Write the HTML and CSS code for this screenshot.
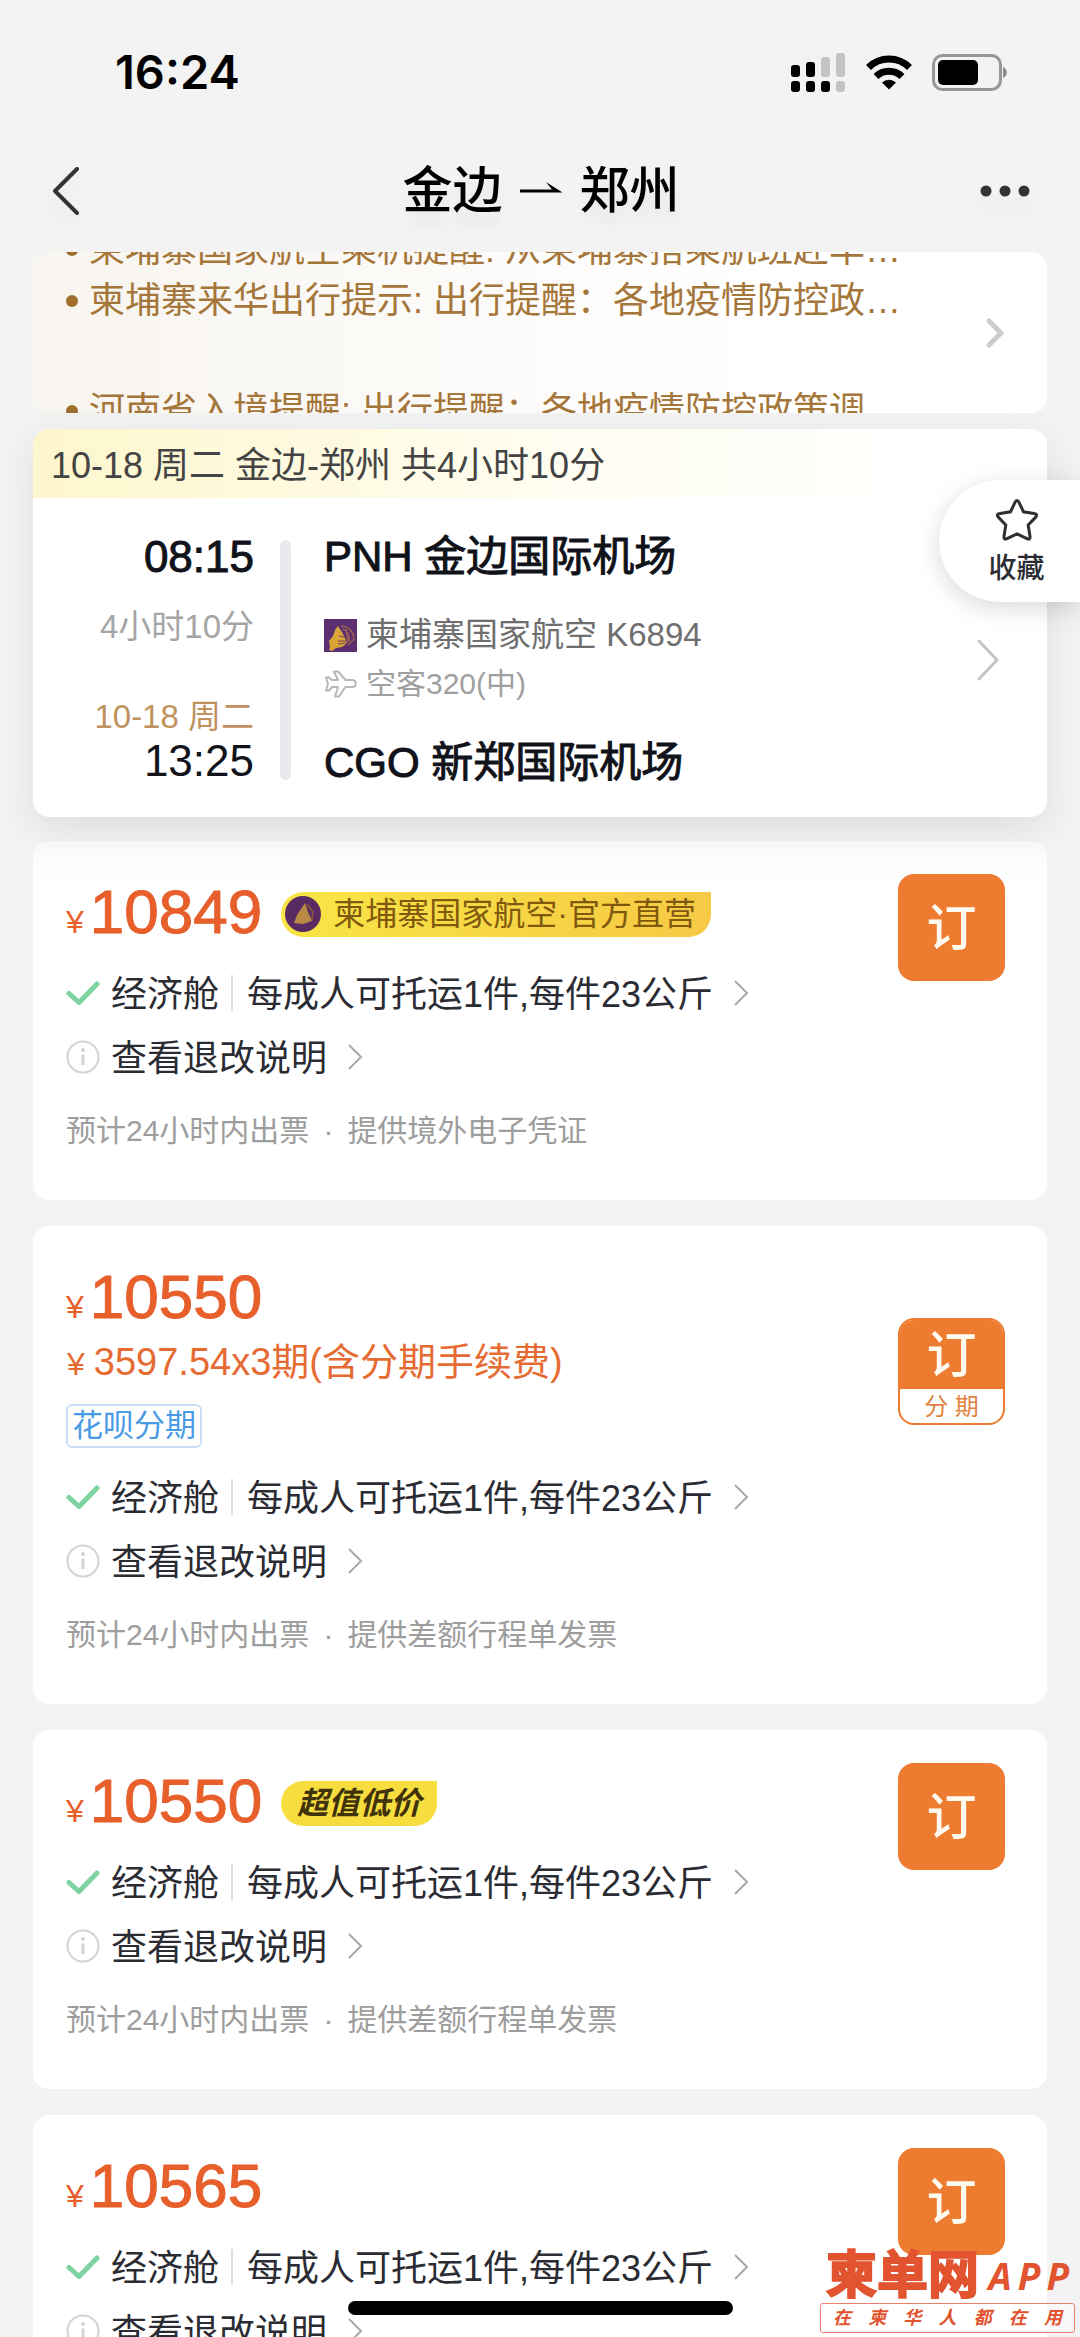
FILE: index.html
```html
<!DOCTYPE html>
<html lang="zh-CN">
<head>
<meta charset="utf-8">
<meta name="viewport" content="width=device-width, initial-scale=1">
<title>金边 - 郑州</title>
<link rel="stylesheet" href="styles.css">
</head>
<body>
<svg class="defs" width="0" height="0" aria-hidden="true">
  <defs>
    <symbol id="chevron" viewBox="0 0 16 28"><path d="M2 2l12 12L2 26" fill="none" stroke="currentColor" stroke-width="2"/></symbol>
    <symbol id="check" viewBox="0 0 34 24"><path d="M3 12.500l10 9L31 3" fill="none" stroke="#7fd3a2" stroke-width="5" stroke-linecap="round"/></symbol>
    <symbol id="info" viewBox="0 0 34 34"><circle cx="17" cy="17" r="15.500" fill="none" stroke="#d3d3d8" stroke-width="2"/><circle cx="17" cy="10" r="2" fill="#d3d3d8"/><path d="M17 14.500v10.500" stroke="#d3d3d8" stroke-width="3"/></symbol>
    <symbol id="airline" viewBox="0 0 33 33"><path d="M14 7l5 8 4 9-5 4-6 1-4 3-3-1 1-3-1-6 4-5 2-6z" fill="#d9a438"/><path d="M17 7c7 0 13 6 13 13l-6 6M19 10c5 2 7 7 6 12M14 22l8 0M14 25l8-1M15 17l5 1M22 10l2 13" fill="none" stroke="#9c5f52" stroke-width="1.500"/></symbol>
  </defs>
</svg>
<div class="app">
  <header>
    <div class="status">
      <span class="clock">16:24</span>
      <div class="status-icons">
        <svg width="55" height="39" viewBox="0 0 55 39"><g fill="#000"><rect x="0" y="12" width="9" height="12" rx="3"/><rect x="15" y="9" width="9" height="15" rx="3"/><rect x="0" y="28" width="9" height="11" rx="3"/><rect x="15" y="28" width="9" height="11" rx="3"/><rect x="30" y="28" width="9" height="11" rx="3"/></g><g fill="#c3c3c3"><rect x="30" y="4" width="9" height="20" rx="3"/><rect x="45" y="0" width="9" height="24" rx="3"/><rect x="45" y="28" width="9" height="11" rx="3"/></g></svg>
        <svg width="46" height="36" viewBox="0 0 46 36"><g fill="none" stroke="#000" stroke-width="7"><path d="M2.500 13.500a29 29 0 0 1 41 0"/><path d="M10 22.500a18.500 18.500 0 0 1 26 0"/></g><path d="M16 28.500a10 10 0 0 1 14 0L23 35.500z"/></svg>
        <svg width="76" height="37" viewBox="0 0 76 37"><rect x="1.500" y="1.500" width="67" height="34" rx="9" fill="none" stroke="#979797" stroke-width="3"/><rect x="6" y="6" width="40" height="25" rx="5"/><path d="M71 13c5 2 5 9 0 11z" fill="#8a8a8a"/></svg>
      </div>
    </div>
    <nav class="nav">
      <button class="icon-button" type="button" aria-label="返回"><svg width="30" height="52" viewBox="0 0 30 52"><path d="M26 4L4 26l22 22" fill="none" stroke="#333" stroke-width="4" stroke-linecap="round" stroke-linejoin="round"/></svg></button>
      <h1 class="title"><span>金边</span><svg width="43" height="18" viewBox="0 0 43 18"><path d="M0 7.500h32L26 0l16.500 10.500H0z"/></svg><span>郑州</span></h1>
      <button class="icon-button" type="button" aria-label="更多"><svg width="52" height="14" viewBox="0 0 52 14" fill="#333"><circle cx="7" cy="7" r="5.500"/><circle cx="26" cy="7" r="5.500"/><circle cx="45" cy="7" r="5.500"/></svg></button>
    </nav>
  </header>

  <main>
    <a class="notice" href="#notice">
      <ul class="notice-list">
        <li>柬埔寨国家航空乘机提醒: 从柬埔寨搭乘航班赴华…</li>
        <li>柬埔寨来华出行提示: 出行提醒：各地疫情防控政…</li>
        <li class="next">河南省入境提醒: 出行提醒：各地疫情防控政策调</li>
      </ul>
      <svg class="notice-chevron" width="18" height="30" viewBox="0 0 18 30"><path d="M3 3l12 12L3 27" fill="none" stroke="#ccc" stroke-width="5" stroke-linecap="round" stroke-linejoin="round"/></svg>
    </a>

    <section class="flight">
      <h2 class="flight-head">10-18 周二 金边-郑州 共4小时10分</h2>
      <div class="flight-body">
        <div class="times">
          <span class="time medium">08:15</span>
          <span class="duration">4小时10分</span>
          <span class="arrive-date">10-18 周二</span>
          <span class="time arrive">13:25</span>
        </div>
        <div class="bar"></div>
        <div class="route">
          <strong class="airport">PNH 金边国际机场</strong>
          <span class="carrier"><svg class="carrier-logo" width="33" height="33"><use href="#airline"/></svg>柬埔寨国家航空 K6894</span>
          <span class="aircraft"><svg width="33" height="30" viewBox="0 0 33 30"><path d="M14 11L10 2.500h4L21.500 11H28c5 0 5 7 0 7h-6.500L15 27.500h-4L14 18H8l-3 3.500H2L4 15 2 8.500h3L8 11z" fill="none" stroke="#b8b8b8" stroke-width="2" stroke-linejoin="round"/></svg>空客320(中)</span>
          <strong class="airport last">CGO 新郑国际机场</strong>
        </div>
        <svg class="flight-chevron" width="22" height="42" viewBox="0 0 22 42"><path d="M2 2l18 19L2 40" fill="none" stroke="#c4c4c4" stroke-width="3" stroke-linecap="round"/></svg>
      </div>
      <button class="favorite" type="button"><svg width="44" height="44" viewBox="0 0 44 44"><path d="M22 2.500c1 0 1.500.800 2 2l4.500 9.300 10.500 1.600c3 .500 3.500 2 1.500 4l-7.300 7.600 1.800 11.500c.300 2.500-1 3.200-3 2.100L22 36l-10 4.600c-2 1.100-3.300.400-3-2.100L10.800 27l-7.300-7.600c-2-2-1.500-3.500 1.500-4l10.500-1.600L20 4.500c.500-1.200 1-2 2-2z" fill="none" stroke="#2f2f33" stroke-width="3"/></svg>收藏</button>
    </section>

    <article class="fare">
      <div class="fare-info">
        <div class="price-line"><span class="price"><span class="yen">¥</span>10849</span><span class="badge official"><svg width="36" height="36" viewBox="0 0 36 36"><circle cx="18" cy="18" r="18" fill="#5a2b63"/><path d="M20 7l3 9 4 9-9 3-9-1 3-8z" fill="#b98a44"/><path d="M22 8l6 8-1 8" stroke="#85503f" fill="none" stroke-width="2"/></svg>柬埔寨国家航空·官方直营</span></div>
        <a class="row" href="#cabin"><svg width="34" height="24"><use href="#check"/></svg><span>经济舱</span><i class="divider"></i><span>每成人可托运1件,每件23公斤</span><svg class="more" width="16" height="28"><use href="#chevron"/></svg></a>
        <a class="row" href="#refund"><svg width="34" height="34"><use href="#info"/></svg><span>查看退改说明</span><svg class="more" width="16" height="28"><use href="#chevron"/></svg></a>
        <p class="note"><span>预计24小时内出票</span><span>·</span><span>提供境外电子凭证</span></p>
      </div>
      <button class="order" type="button">订</button>
    </article>

    <article class="fare">
      <div class="fare-info">
        <div class="price-line"><span class="price"><span class="yen">¥</span>10550</span></div>
        <p class="installment"><span class="yen">¥</span>3597.54x3期(含分期手续费)</p>
        <span class="tag">花呗分期</span>
        <a class="row" href="#cabin"><svg width="34" height="24"><use href="#check"/></svg><span>经济舱</span><i class="divider"></i><span>每成人可托运1件,每件23公斤</span><svg class="more" width="16" height="28"><use href="#chevron"/></svg></a>
        <a class="row" href="#refund"><svg width="34" height="34"><use href="#info"/></svg><span>查看退改说明</span><svg class="more" width="16" height="28"><use href="#chevron"/></svg></a>
        <p class="note"><span>预计24小时内出票</span><span>·</span><span>提供差额行程单发票</span></p>
      </div>
      <button class="order split" type="button"><span class="order-main">订</span><span class="order-sub">分 期</span></button>
    </article>

    <article class="fare">
      <div class="fare-info">
        <div class="price-line"><span class="price"><span class="yen">¥</span>10550</span><span class="badge value">超值低价</span></div>
        <a class="row" href="#cabin"><svg width="34" height="24"><use href="#check"/></svg><span>经济舱</span><i class="divider"></i><span>每成人可托运1件,每件23公斤</span><svg class="more" width="16" height="28"><use href="#chevron"/></svg></a>
        <a class="row" href="#refund"><svg width="34" height="34"><use href="#info"/></svg><span>查看退改说明</span><svg class="more" width="16" height="28"><use href="#chevron"/></svg></a>
        <p class="note"><span>预计24小时内出票</span><span>·</span><span>提供差额行程单发票</span></p>
      </div>
      <button class="order" type="button">订</button>
    </article>

    <article class="fare">
      <div class="fare-info">
        <div class="price-line"><span class="price"><span class="yen">¥</span>10565</span></div>
        <a class="row" href="#cabin"><svg width="34" height="24"><use href="#check"/></svg><span>经济舱</span><i class="divider"></i><span>每成人可托运1件,每件23公斤</span><svg class="more" width="16" height="28"><use href="#chevron"/></svg></a>
        <a class="row" href="#refund"><svg width="34" height="34"><use href="#info"/></svg><span>查看退改说明</span><svg class="more" width="16" height="28"><use href="#chevron"/></svg></a>
      </div>
      <button class="order" type="button">订</button>
    </article>
  </main>

  <div class="home-indicator"></div>
  <div class="watermark">
    <div class="watermark-name"><span class="watermark-brand">柬单网</span><span class="watermark-app"><span>A</span><span>P</span><span>P</span></span></div>
    <div class="watermark-line"><span>在</span><span>柬</span><span>华</span><span>人</span><span>都</span><span>在</span><span>用</span></div>
  </div>
</div>
</body>
</html>
```
FILE: styles.css
```css
* { box-sizing: border-box; }

body {
  margin: 0;
  background: #f3f3f3;
  color: #2b2c33;
  font-family: "Liberation Sans", "Noto Sans CJK SC", sans-serif;
  font-size: 36px;
}

h1, h2, p, ul { margin: 0; padding: 0; font-weight: 400; }
a { color: inherit; text-decoration: none; }
button { border: 0; padding: 0; background: none; font: inherit; color: inherit; }
svg { display: block; flex: none; }
.defs { position: absolute; }

.app {
  position: relative;
  height: 100vh;
  overflow: hidden;
  display: flex;
  flex-direction: column;
}
header { flex: none; padding-bottom: 14px; }

/* Status bar */
.status {
  height: 144px;
  padding: 0 72px 0 115px;
  display: flex;
  align-items: center;
  justify-content: space-between;
}
.clock { font: 600 47px/56px Inter, sans-serif; color: #000; }
.status-icons { display: flex; align-items: center; gap: 20px; }

/* Title bar */
.nav {
  height: 94px;
  padding: 0 49px 0 51px;
  display: grid;
  grid-template-columns: 60px 1fr 60px;
  align-items: center;
}
.icon-button { display: flex; align-items: center; height: 60px; filter: drop-shadow(0 12px 8px rgba(0, 0, 0, .05)); }
.icon-button:last-child { justify-content: flex-end; }
.title {
  display: flex;
  align-items: center;
  justify-content: center;
  gap: 17px;
  font-size: 50px;
  line-height: 60px;
  font-weight: 500;
  color: #000;
  text-shadow: 0 14px 12px rgba(0, 0, 0, .05);
}

main {
  flex: 1;
  min-height: 0;
  padding: 0 33px;
}

/* Travel notice ticker */
.notice {
  display: flex;
  align-items: center;
  justify-content: space-between;
  height: 161px;
  padding: 0 43px 0 33px;
  overflow: hidden;
  border-radius: 16px;
  background: linear-gradient(90deg, #f8f5f0, #fff 75%);
  color: #a5763a;
}
.notice-list { align-self: flex-start; margin-top: -28px; list-style: none; line-height: 51px; white-space: nowrap; }
.notice-list li { display: flex; align-items: center; gap: 11px; }
.notice-list li::before { content: ""; width: 12px; height: 12px; border-radius: 50%; background: #a06f2d; }
.notice-list .next { margin-top: 59px; }

/* Flight summary */
.flight {
  position: relative;
  margin-top: 16px;
  border-radius: 16px;
  background: #fff;
  box-shadow: 0 12px 40px rgba(0, 0, 0, .09);
}
.flight-head {
  padding: 11px 18px 7px;
  border-radius: 16px 16px 0 0;
  background: linear-gradient(90deg, #fdf6cc, #fffdf0 50%, #fff 90%);
  font-size: 36px;
  line-height: 51px;
  color: #444;
}
.flight-body {
  padding: 37px 48px 32px 20px;
  display: grid;
  grid-template-columns: 201px 11px 1fr 22px;
  column-gap: 26px;
  align-items: stretch;
}
.times { display: flex; flex-direction: column; text-align: right; }
.time { font-size: 44px; line-height: 44px; color: #11131a; }
.medium { -webkit-text-stroke: 1px; }
.time.arrive { line-height: 48px; }
.duration { margin-top: 28px; font-size: 33px; line-height: 40px; color: #a5a5a5; }
.arrive-date { margin-top: auto; font-size: 33px; line-height: 40px; color: #bf925e; }
.bar { margin: 5px 0; border-radius: 6px; background: #e9eaee; }
.route { display: flex; flex-direction: column; padding-left: 7px; }
.airport { font-size: 42px; line-height: 44px; font-weight: 400; color: #11131a; -webkit-text-stroke: 1px; }
.airport.last { margin-top: 39px; }
.carrier, .aircraft { display: flex; align-items: center; gap: 9px; line-height: 36px; }
.carrier { margin-top: 38px; font-size: 33px; color: #6f6f6f; }
.carrier-logo { background: #5c3070; }
.aircraft { margin-top: 13px; font-size: 30px; color: #a0a0a0; }
.flight-chevron { align-self: center; }

.favorite {
  position: absolute;
  top: 51px;
  right: -33px;
  width: 141px;
  height: 122px;
  padding: 18px 0 0 14px;
  display: flex;
  flex-direction: column;
  align-items: center;
  border-radius: 61px 0 0 61px;
  background: #fff;
  box-shadow: 0 6px 24px rgba(0, 0, 0, .15);
  font-size: 28px;
  line-height: 54px;
  font-weight: 500;
  color: #2b2c33;
}

/* Fares */
.fare {
  margin-top: 26px;
  padding: 0 42px 50px 33px;
  display: flex;
  justify-content: space-between;
  align-items: flex-start;
  border-radius: 16px;
  background: #fff;
}
.flight + .fare { margin-top: 24px; background: linear-gradient(#fbfbfb, #fff 48px); }
.fare-info { flex: 1; padding-top: 43px; }
.price-line { display: flex; align-items: center; height: 60px; margin-bottom: 17px; gap: 19px; }
.price { padding-top: 6px; font-size: 62px; line-height: 60px; color: #e75f2b; -webkit-text-stroke: 1px; }
.yen { font-size: 32px; margin-right: 6px; -webkit-text-stroke: 0; }
.installment { margin-top: -9px; font-size: 38px; line-height: 50px; color: #e66b33; }
.installment .yen { margin: 0 9px 0 1px; }
.tag {
  display: inline-block;
  margin: 15px 0 17px;
  padding: 0 4px;
  border: 2px solid #c8dff5;
  border-radius: 6px;
  font-size: 31px;
  line-height: 40px;
  color: #4a9be6;
  vertical-align: top;
}
.badge {
  height: 45px;
  display: flex;
  align-items: center;
  border-radius: 23px 0 23px 23px;
  line-height: 45px;
}
.badge.official {
  gap: 12px;
  padding: 0 15px 0 4px;
  background: linear-gradient(110deg, #f8e545, #f6c944);
  font-size: 32px;
  color: #80590f;
}
.badge.value { padding: 0 16px; background: #f8dd3e; font-size: 31px; font-weight: 700; font-style: italic; color: #40330c; }

.row { display: flex; align-items: center; height: 64px; white-space: nowrap; }
.row span { padding-bottom: 4px; }
.row > svg:first-child { margin-right: 11px; }
.divider { width: 2px; height: 36px; margin: 0 14px 0 12px; background: #ddd; }
.more { margin-left: 20px; color: #a8a8ab; }
.note { display: flex; gap: 14px; margin-top: 21px; font-size: 30px; line-height: 42px; margin-bottom: -2px; color: #9d9d9d; }

.order {
  flex: none;
  width: 107px;
  height: 107px;
  margin-top: 33px;
  padding-top: 4px;
  border-radius: 16px;
  background: #ed7b30;
  color: #fffaf0;
  font-size: 50px;
  line-height: 103px;
  font-weight: 500;
}
.order.split {
  margin-top: 92px;
  padding: 0;
  display: flex;
  flex-direction: column;
  border: 2px solid #ed7b30;
  background: #fff;
  overflow: hidden;
}
.order-main { background: #ed7b30; padding-top: 4px; line-height: 65px; align-self: stretch; }
.order-sub { flex: 1; align-self: stretch; color: #e0803f; font-size: 24px; line-height: 36px; font-weight: 400; }

/* Overlays */
.home-indicator {
  position: absolute;
  left: 50%;
  bottom: 22px;
  width: 385px;
  height: 14px;
  margin-left: -192px;
  border-radius: 7px;
  background: #000;
}
.watermark { position: absolute; right: 5px; bottom: 4px; width: 255px; color: #e25330; font-style: italic; font-weight: 700; }
.watermark-name { display: flex; align-items: center; justify-content: space-between; padding: 0 6px; height: 54px; }
.watermark-brand { font-size: 51px; line-height: 54px; font-style: normal; -webkit-text-stroke: 2px; }
.watermark-app { display: flex; gap: 6px; font: italic 700 37px/56px "Open Sans", sans-serif; }
.watermark-line {
  display: flex;
  justify-content: space-between;
  padding: 0 12px;
  border: 1px solid #e8806a;
  border-radius: 3px;
  background: rgba(255, 255, 255, .5);
  font-size: 18px;
  line-height: 28px;
}
```
